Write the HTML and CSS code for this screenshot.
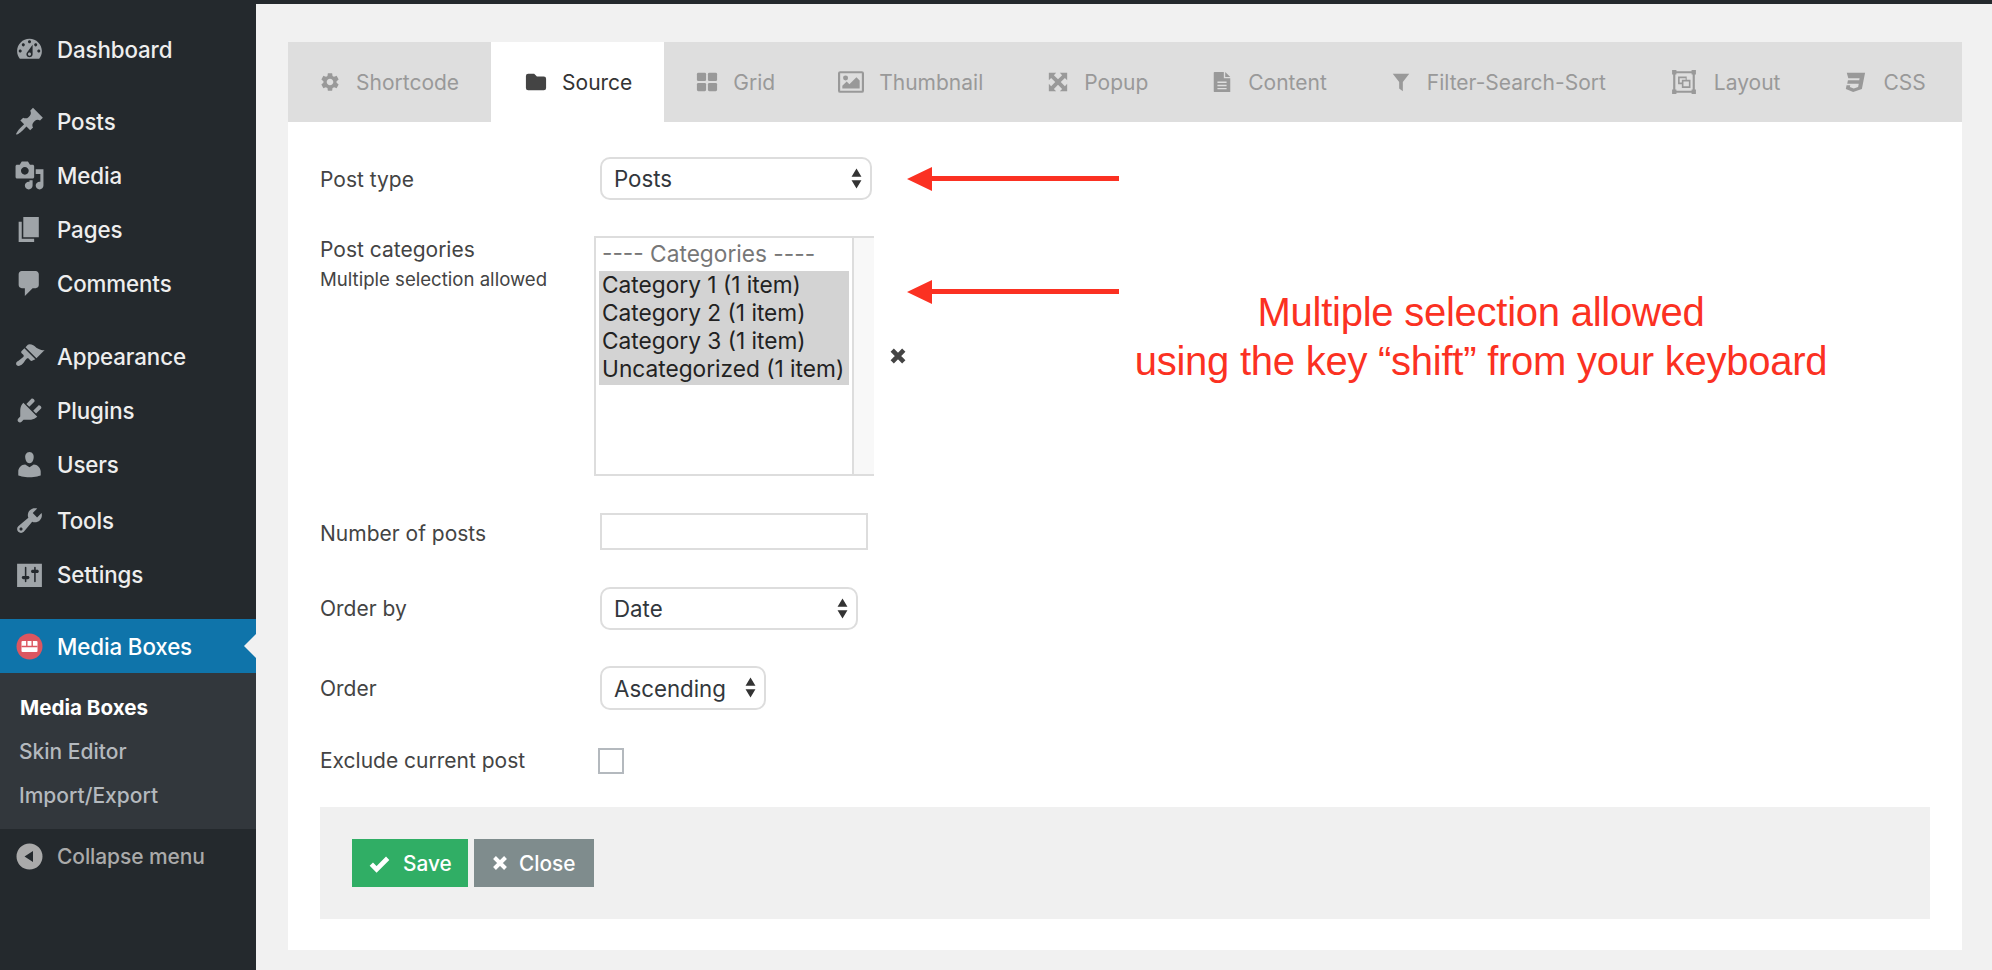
FILE: index.html
```html
<!DOCTYPE html>
<html lang="en">
<head>
<meta charset="utf-8">
<title>Media Boxes</title>
<link rel="stylesheet" href="styles.css">
</head>
<body>
<div class="app">
  <nav class="sidebar">
    <ul class="menu">
      <li class="item"><svg class="mi" viewBox="0 0 20 20"><path d="M3.76 16h12.48c1.1-1.37 1.76-3.11 1.76-5 0-4.42-3.58-8-8-8s-8 3.58-8 8c0 1.89.66 3.63 1.76 5zM10 4c.55 0 1 .45 1 1s-.45 1-1 1-1-.45-1-1 .45-1 1-1zM6 6c.55 0 1 .45 1 1s-.45 1-1 1-1-.45-1-1 .45-1 1-1zm8 0c.55 0 1 .45 1 1s-.45 1-1 1-1-.45-1-1 .45-1 1-1zm-5.37 5.55L12 7v6c0 1.1-.9 2-2 2s-2-.9-2-2c0-.57.24-1.08.63-1.45zM4 10c.55 0 1 .45 1 1s-.45 1-1 1-1-.45-1-1 .45-1 1-1zm12 0c.55 0 1 .45 1 1s-.45 1-1 1-1-.45-1-1 .45-1 1-1zm-5 3c0-.55-.45-1-1-1s-1 .45-1 1 .45 1 1 1 1-.45 1-1z" fill-rule="evenodd"/></svg><span>Dashboard</span></li>
    </ul>
    <ul class="menu menu-content">
      <li class="item"><svg class="mi" viewBox="0 0 20 20"><path d="M10.44 3.02l1.82-1.82 6.36 6.35-1.83 1.82c-1.05-.68-2.48-.57-3.41.36l-.75.75c-.92.93-1.04 2.35-.35 3.41l-1.83 1.82-2.41-2.41-2.8 2.79c-.42.42-3.38 2.71-3.8 2.29s1.86-3.39 2.28-3.81l2.79-2.79L4.1 9.36l1.83-1.82c1.05.69 2.48.57 3.41-.36l.75-.75c.93-.92 1.04-2.35.35-3.41z"/></svg><span>Posts</span></li>
      <li class="item"><svg class="mi" viewBox="0 0 20 20"><path d="M13 11V4c0-.55-.45-1-1-1h-1.67L9 1H5L3.67 3H2c-.55 0-1 .45-1 1v7c0 .55.45 1 1 1h10c.55 0 1-.45 1-1zM7 4.5c1.38 0 2.5 1.12 2.5 2.5S8.38 9.5 7 9.5 4.5 8.38 4.5 7 5.62 4.5 7 4.5zM14 6h5v10.5c0 1.38-1.12 2.5-2.5 2.5S14 17.88 14 16.5s1.12-2.5 2.5-2.5c.17 0 .34.02.5.05V9h-3V6zm-4 8.05V13h2v3.5c0 1.38-1.12 2.5-2.5 2.5S7 17.88 7 16.5 8.12 14 9.5 14c.17 0 .34.02.5.05z" fill-rule="evenodd"/></svg><span>Media</span></li>
      <li class="item"><svg class="mi" viewBox="0 0 20 20"><path d="M6 15V2h10v13H6zm-1 1h8v2H3V5h2v11z"/></svg><span>Pages</span></li>
      <li class="item"><svg class="mi" viewBox="0 0 20 20"><path d="M5 2h9c1.1 0 2 .9 2 2v7c0 1.1-.9 2-2 2h-2l-5 5v-5H5c-1.1 0-2-.9-2-2V4c0-1.1.9-2 2-2z"/></svg><span>Comments</span></li>
    </ul>
    <ul class="menu">
      <li class="item"><svg class="mi" viewBox="0 0 20 20"><path d="M14.48 11.06L7.41 3.99l1.5-1.5c.5-.56 2.3-.47 3.51.32 1.21.8 1.43 1.28 2.91 2.1 1.18.64 2.45 1.26 4.45.85zm-.71.71L6.7 4.7 4.93 6.47c-.39.39-.39 1.02 0 1.41l1.06 1.06c.39.39.39 1.03 0 1.42-.6.6-1.43 1.11-2.21 1.69-.35.26-.7.53-1.01.84C1.43 13.23.91 14.81 1.8 15.7c.89.89 2.46.37 3.8-.98.31-.31.58-.66.84-1.01.58-.78 1.09-1.61 1.69-2.21.39-.39 1.02-.39 1.41 0l1.06 1.06c.39.39 1.02.39 1.41 0z"/></svg><span>Appearance</span></li>
      <li class="item"><svg class="mi" viewBox="0 0 20 20"><path d="M13.11 4.36L9.87 7.6 8 5.73l3.24-3.24c.35-.34 1.05-.2 1.56.32.52.51.66 1.21.31 1.55zm-8 1.77l.91-1.12 9.01 9.01-1.19.84c-.71.71-2.63 1.16-3.82 1.16H6.14L4.9 17.26c-.59.59-1.54.59-2.12 0-.59-.58-.59-1.53 0-2.12l1.24-1.24v-3.88c0-1.13.4-3.19 1.09-3.89zm7.26 3.97l3.24-3.24c.34-.35 1.04-.21 1.55.31.52.51.66 1.21.31 1.55l-3.24 3.25z"/></svg><span>Plugins</span></li>
      <li class="item"><svg class="mi" viewBox="0 0 20 20"><path d="M10 9.25c-2.27 0-2.73-3.44-2.73-3.44C7 4.02 7.82 2 9.97 2c2.16 0 2.98 2.02 2.71 3.81 0 0-.41 3.44-2.68 3.44zm0 2.57L12.72 10c2.39 0 4.52 2.33 4.52 4.53v2.49s-3.65 1.13-7.24 1.13c-3.65 0-7.24-1.13-7.24-1.13v-2.49c0-2.25 1.94-4.48 4.47-4.48z"/></svg><span>Users</span></li>
      <li class="item item-tools"><svg class="mi" viewBox="0 0 20 20"><path d="M16.68 9.77c-1.34 1.34-3.3 1.67-4.95.99l-5.41 6.52c-.99.99-2.59.99-3.58 0s-.99-2.59 0-3.57l6.52-5.42c-.68-1.65-.35-3.61.99-4.95 1.28-1.28 3.12-1.62 4.72-1.06l-2.89 2.89 2.82 2.82 2.86-2.87c.53 1.58.18 3.39-1.08 4.65zM3.81 16.21c.4.39 1.04.39 1.43 0 .4-.4.4-1.04 0-1.43-.39-.4-1.03-.4-1.43 0-.39.39-.39 1.03 0 1.43z" fill-rule="evenodd"/></svg><span>Tools</span></li>
      <li class="item"><svg class="mi" viewBox="0 0 20 20"><path d="M18 16V3H2v15h16zM8 11h1c.55 0 1 .45 1 1s-.45 1-1 1H8v1.5c0 .28-.22.5-.5.5s-.5-.22-.5-.5V13H6c-.55 0-1-.45-1-1s.45-1 1-1h1V5.5c0-.28.22-.5.5-.5s.5.22.5.5V11zm5-2h-1c-.55 0-1-.45-1-1s.45-1 1-1h1V5.5c0-.28.22-.5.5-.5s.5.22.5.5V7h1c.55 0 1 .45 1 1s-.45 1-1 1h-1v5.5c0 .28-.22.5-.5.5s-.5-.22-.5-.5V9z" fill-rule="evenodd"/></svg><span>Settings</span></li>
    </ul>
    <div class="current">
      <div class="item active"><svg class="mi" viewBox="0 0 31 31"><circle class="mb-circle" cx="15.500" cy="15.500" r="13"/><rect class="mb-cell" x="7.500" y="10" width="16" height="11" rx="1"/><path class="mb-line" d="M7.500 15.500h16M12.800 10v5.500M18.200 10v5.500"/></svg><span>Media Boxes</span></div>
      <ul class="submenu">
        <li class="sub-on">Media Boxes</li>
        <li>Skin Editor</li>
        <li>Import/Export</li>
      </ul>
    </div>
    <div class="item collapse"><svg class="mi" viewBox="0 0 31 31"><path d="M15.500 2.500a13 13 0 1 0 0 26 13 13 0 0 0 0-26zM19 10v11l-8.500-5.500z" fill-rule="evenodd"/></svg><span>Collapse menu</span></div>
  </nav>

  <main class="main">
    <section class="panel">
      <div class="tabs">
        <div class="tab"><svg class="ti" viewBox="0 0 24 24"><path d="M19.14 12.94c.04-.3.06-.61.06-.94 0-.32-.02-.64-.07-.94l2.03-1.58c.18-.14.23-.41.12-.61l-1.92-3.32c-.12-.22-.37-.29-.59-.22l-2.39.96c-.5-.38-1.03-.7-1.62-.94l-.36-2.54c-.04-.24-.24-.41-.48-.41h-3.84c-.24 0-.43.17-.47.41l-.36 2.54c-.59.24-1.13.57-1.62.94l-2.39-.96c-.22-.08-.47 0-.59.22L2.74 8.87c-.12.21-.08.47.12.61l2.03 1.58c-.05.3-.09.63-.09.94s.02.64.07.94l-2.03 1.58c-.18.14-.23.41-.12.61l1.92 3.32c.12.22.37.29.59.22l2.39-.96c.5.38 1.03.7 1.62.94l.36 2.54c.05.24.24.41.48.41h3.84c.24 0 .44-.17.47-.41l.36-2.54c.59-.24 1.13-.56 1.62-.94l2.39.96c.22.08.47 0 .59-.22l1.92-3.32c.12-.22.07-.47-.12-.61l-2.01-1.58zM12 15.6c-1.98 0-3.6-1.62-3.6-3.6s1.62-3.6 3.6-3.6 3.6 1.62 3.6 3.6-1.62 3.6-3.6 3.6z" fill-rule="evenodd"/></svg><span>Shortcode</span></div>
        <div class="tab on"><svg class="ti" viewBox="0 0 24 24"><path d="M10 3H3.5A2.5 2.5 0 0 0 1 5.5v13A2.5 2.5 0 0 0 3.500 21h17a2.500 2.500 0 0 0 2.500-2.500v-10A2.500 2.500 0 0 0 20.500 6H13z"/></svg><span>Source</span></div>
        <div class="tab pad"><svg class="ti" viewBox="0 0 24 24"><rect x="1" y="2" width="10" height="9" rx="1.500"/><rect x="13" y="2" width="10" height="9" rx="1.500"/><rect x="1" y="13" width="10" height="9" rx="1.500"/><rect x="13" y="13" width="10" height="9" rx="1.500"/></svg><span>Grid</span></div>
        <div class="tab"><svg class="ti wide" viewBox="0 0 24 20"><path d="M2 0h20a2 2 0 0 1 2 2v16a2 2 0 0 1-2 2H2a2 2 0 0 1-2-2V2a2 2 0 0 1 2-2zm0 2v16h20V2zm2 14v-2.500l4-4 2.500 2.500 6.500-6.500 3 3V16zM7 8.500a2.300 2.300 0 1 1 0-4.600 2.300 2.300 0 0 1 0 4.600z" fill-rule="evenodd"/></svg><span>Thumbnail</span></div>
        <div class="tab pad"><svg class="ti" viewBox="0 0 24 24"><path d="M2 2h8L7.500 4.500 12 9l4.500-4.500L14 2h8v8l-2.500-2.500L15 12l4.500 4.500L22 14v8h-8l2.500-2.500L12 15l-4.500 4.500L10 22H2v-8l2.500 2.500L9 12 4.500 7.500 2 10z"/></svg><span>Popup</span></div>
        <div class="tab"><svg class="ti" viewBox="0 0 24 24"><path d="M4 1h10v7h7v15H4a1 1 0 0 1-1-1V2a1 1 0 0 1 1-1zm11.500 0L21 6.500h-5.500zM7 11.500v1.500h10v-1.500zm0 3.500v1.500h10V15zm0 3.500V20h10v-1.500z" fill-rule="evenodd"/></svg><span>Content</span></div>
        <div class="tab"><svg class="ti" viewBox="0 0 24 24"><path d="M3 3h18l-7 9v10l-4-3v-7z"/></svg><span>Filter-Search-Sort</span></div>
        <div class="tab tab-layout"><svg class="ti wide" viewBox="0 0 24 24"><path d="M1 1h4v1h14V1h4v4h-1v14h1v4h-4v-1H5v1H1v-4h1V5H1zm4 3v1H4v14h1v1h14v-1h1V5h-1V4zm1.500 3h8v3H18v7.500h-8V14H6.500zm1.500 1.500v4h2V10h3.500V8.500zm3.500 3V16H16.500v-4.500z" fill-rule="evenodd"/></svg><span>Layout</span></div>
        <div class="tab tab-css"><svg class="ti" viewBox="0 0 24 24"><path d="M3 2h20l-3.500 17.500L10 23l-8-3.500.800-4h4l-.4 2 4.200 1.700 4.800-1.700.700-3.500H3.500l.8-4h12.300l.4-2H4.700z"/></svg><span>CSS</span></div>
      </div>

      <div class="form">
        <div class="row">
          <label class="lbl lbl-type">Post type</label>
          <div class="select sel-type"><span>Posts</span><svg class="updown" viewBox="0 0 10 18"><path d="M5 0l4.500 7.500h-9zM5 18L.5 10.500h9z"/></svg></div>
        </div>
        <div class="row row-cats">
          <div class="lbl">Post categories<small class="hint">Multiple selection allowed</small></div>
          <div class="listwrap">
            <div class="list">
              <div class="options">
                <div class="opt-head">---- Categories ----</div>
                <div class="opt">Category 1 (1 item)</div>
                <div class="opt">Category 2 (1 item)</div>
                <div class="opt">Category 3 (1 item)</div>
                <div class="opt">Uncategorized (1 item)</div>
              </div>
              <div class="track"></div>
            </div>
            <svg class="clear" viewBox="0 0 14 14"><path d="M2.500 2.500l9 9M11.500 2.500l-9 9"/></svg>
          </div>
        </div>
        <div class="row row-num">
          <label class="lbl">Number of posts</label>
          <input class="num" type="text">
        </div>
        <div class="row row-by">
          <label class="lbl lbl-by">Order by</label>
          <div class="select sel-by"><span>Date</span><svg class="updown" viewBox="0 0 10 18"><path d="M5 0l4.500 7.500h-9zM5 18L.5 10.500h9z"/></svg></div>
        </div>
        <div class="row row-order">
          <label class="lbl lbl-type">Order</label>
          <div class="select sel-order"><span>Ascending</span><svg class="updown" viewBox="0 0 10 18"><path d="M5 0l4.500 7.500h-9zM5 18L.5 10.500h9z"/></svg></div>
        </div>
        <div class="row row-ex">
          <label class="lbl lbl-ex">Exclude current post</label>
          <span class="check"></span>
        </div>
        <div class="actions">
          <div class="btn save"><svg class="bi" viewBox="0 0 18 18"><path d="M2 9.500l4.500 4.500L16 4.500"/></svg><span>Save</span></div>
          <div class="btn close"><svg class="bi" viewBox="0 0 18 18"><path d="M3.500 3.500l11 11M14.500 3.500l-11 11"/></svg><span>Close</span></div>
        </div>
      </div>

      <svg class="arrow arrow-a" viewBox="0 0 212 26"><path d="M0 13L25 1v9h187v5H25v10z"/></svg>
      <svg class="arrow arrow-b" viewBox="0 0 212 26"><path d="M0 13L25 1v9h187v5H25v10z"/></svg>
      <p class="note">Multiple selection allowed<br>using the key “shift” from your keyboard</p>
    </section>
  </main>
</div>
</body>
</html>
```
FILE: styles.css
```css
* { box-sizing: border-box; }
html, body { margin: 0; height: 970px; overflow: hidden; }
body { background: #f1f1f1; font-family: Inter, "Noto Sans", sans-serif; color: #444; }
ul { list-style: none; margin: 0; padding: 0; }
.app { display: flex; height: 970px; }

.sidebar { width: 256px; flex: none; background: #24292d; padding-top: 22px; color: #eee; }
.menu { margin-bottom: 18px; }
.menu-content { margin-bottom: 19px; }
.item { display: flex; align-items: center; height: 54px; padding-left: 14px; gap: 12px; font-size: 22.300px; font-weight: 500; color: #eee; letter-spacing: -.1px; position: relative; }
.item-tools { margin-top: 2px; }
.mi { width: 31px; height: 31px; flex: none; fill: #9fa4a8; }
.active { background: #0f74aa; color: #fff; }
.active::after { content: ""; position: absolute; right: 0; top: 50%; margin-top: -12px; border: 12px solid transparent; border-right-color: #f1f1f1; border-left-width: 0; }
.mb-circle { fill: #dc5660; }
.mb-cell { fill: #fff; }
.active .mi .mb-line { stroke: #dc5660; stroke-width: 1.400; fill: none; }
.submenu { background: #32373c; height: 156px; padding: 13px 0 0 19px; color: #b4b9be; font-size: 21px; font-weight: 500; }
.submenu li { height: 44px; line-height: 44px; }
.submenu .sub-on { color: #fff; font-weight: 700; font-size: 20.600px; padding-left: 1px; }
.collapse { color: #aaa; font-size: 21px; }
.collapse .mi { fill: #aaa; }

.main { flex: 1; border-top: 4px solid #24292d; padding: 38px 30px 0 32px; min-width: 0; }
.panel { position: relative; background: #fff; height: 908px; }

.tabs { display: flex; height: 80px; background: #dedede; }
.tab { display: flex; align-items: center; gap: 15px; padding: 0 32px 0 31px; font-size: 21px; color: #999; white-space: nowrap; }
.tab.on { background: #fff; color: #333; padding-left: 34px; }
.tab.pad { padding-left: 32px; }
.tab-layout { padding-left: 33px; gap: 17px; }
.tab-css { padding-left: 32px; gap: 17px; }
.ti { width: 22px; height: 22px; fill: #999; flex: none; }
.ti.wide { width: 26px; height: 26px; }
.on .ti { fill: #444; }

.form { padding: 35px 32px 0; }
.row { display: flex; align-items: flex-start; }
.lbl { width: 274px; flex: none; font-size: 21px; color: #444; padding-top: 8px; }
.lbl-type { padding-top: 10px; }
.lbl-by { padding-top: 9px; }
.hint { display: block; font-size: 18.600px; margin-top: 3px; }
.select { display: flex; align-items: center; justify-content: space-between; margin-left: 6px; border: 2px solid #ddd; border-radius: 10px; padding: 0 8px 0 12px; background: #fff; font-size: 22.300px; color: #32373c; }
.updown { width: 11px; height: 21px; fill: #333; flex: none; margin-top: -1px; }
.sel-type { width: 272px; height: 43px; }
.sel-by { width: 258px; height: 43px; }
.sel-order { width: 166px; height: 44px; }
.row-cats { margin-top: 36px; }
.row-cats .lbl { padding-top: 1px; line-height: 26px; }
.listwrap { display: flex; align-items: flex-start; }
.list { display: flex; width: 280px; height: 240px; border: 2px solid #ddd; border-right: 0; }
.options { width: 258px; border-right: 2px solid #ddd; padding: 2px 3px; font-size: 22.700px; color: #222; }
.opt-head { color: #777; padding-left: 3px; height: 31px; line-height: 28px; }
.opt { background: #d3d3d3; padding-left: 3px; white-space: nowrap; height: 28px; line-height: 28px; }
.opt:last-child { height: 30px; }
.track { flex: 1; background: #f8f8f8; }
.clear { width: 18px; height: 18px; margin: 111px 0 0 15px; fill: none; stroke: #444; stroke-width: 3.600; }
.row-num { margin-top: 37px; }
.num { width: 268px; height: 37px; margin: 0 0 0 6px; padding: 0; border: 2px solid #ddd; background: #fff; }
.row-by { margin-top: 37px; }
.row-order { margin-top: 36px; }
.row-ex { margin-top: 38px; }
.lbl-ex { padding-top: 0; }
.check { width: 26px; height: 26px; margin-left: 4px; border: 2px solid #b4b9be; background: #fff; }

.actions { display: flex; gap: 6px; height: 112px; margin-top: 33px; padding: 32px; background: #f0f0f0; }
.btn { display: flex; align-items: center; height: 48px; color: #fff; font-size: 20.800px; font-weight: 500; }
.save { width: 116px; padding-left: 17px; gap: 13px; background: #30ae65; }
.save .bi { width: 21px; height: 21px; }
.close { width: 120px; padding-left: 17px; gap: 10px; background: #7f8c8d; }
.bi { width: 18px; height: 18px; flex: none; fill: none; stroke: #fff; stroke-width: 4; }

.arrow { position: absolute; left: 619px; width: 212px; height: 26px; fill: #fb3122; }
.arrow-a { top: 124px; }
.arrow-b { top: 237px; }
.note { position: absolute; left: 760px; top: 246px; width: 866px; margin: 0; text-align: center; font-family: "Liberation Sans", Arial, sans-serif; font-size: 40px; line-height: 49px; color: #fb3122; letter-spacing: -.25px; }
```
